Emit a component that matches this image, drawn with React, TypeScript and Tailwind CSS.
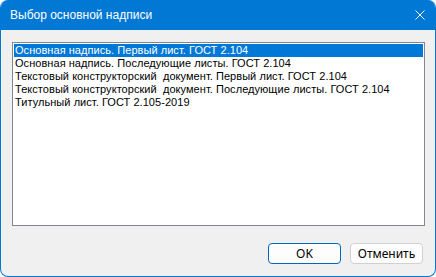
const items = [
  "Основная надпись. Первый лист. ГОСТ 2.104",
  "Основная надпись. Последующие листы. ГОСТ 2.104",
  "Текстовый конструкторский  документ. Первый лист. ГОСТ 2.104",
  "Текстовый конструкторский  документ. Последующие листы. ГОСТ 2.104",
  "Титульный лист. ГОСТ 2.105-2019",
];

const App = () => {
  return (
    <div className="w-[436px] h-[277px] bg-white">
      <div className="flex flex-col w-[436px] h-[277px] rounded-t-lg rounded-b-lg overflow-hidden border border-t-0 border-[#0078d4] bg-[#f0f0f0]">
        {/* title bar */}
        <div className="flex items-center justify-between h-[30px] -mx-px pl-[10px] pr-[11px] bg-[#0078d4] text-white">
          <span className="text-[12px] font-['Liberation_Sans',Arial,sans-serif]">
            Выбор основной надписи
          </span>
          <svg width="10" height="10" viewBox="0 0 10 10" fill="none">
            <path d="M0.5 0.5L9.5 9.5M9.5 0.5L0.5 9.5" stroke="white" strokeWidth="1" />
          </svg>
        </div>

        {/* list */}
        <div className="ml-[11px] mt-[12px] w-[413px] h-[184px] border border-[#828790] bg-white p-px">
          <ul className="font-['Liberation_Sans',Arial,sans-serif] text-[11px] tracking-[0.05px] leading-[13px] text-black">
            {items.map((item, i) => (
              <li
                key={item}
                className={`whitespace-pre pl-[1px] h-[13px] ${
                  i === 0 ? "bg-[#0078d7] text-white" : ""
                }`}
              >
                {item}
              </li>
            ))}
          </ul>
        </div>

        {/* buttons */}
        <div className="flex justify-end gap-[9px] mt-[17px] pr-[12px] font-['Noto_Sans',sans-serif] text-[12px]">
          <button className="w-[73px] h-[21px] rounded-[4px] border border-[#0067c0] bg-[#fdfdfd] text-black leading-none">
            OK
          </button>
          <button className="w-[73px] h-[21px] rounded-[4px] border border-[#d0d0d0] bg-[#fdfdfd] text-black leading-none">
            Отменить
          </button>
        </div>
      </div>
    </div>
  );
};

export default App;
